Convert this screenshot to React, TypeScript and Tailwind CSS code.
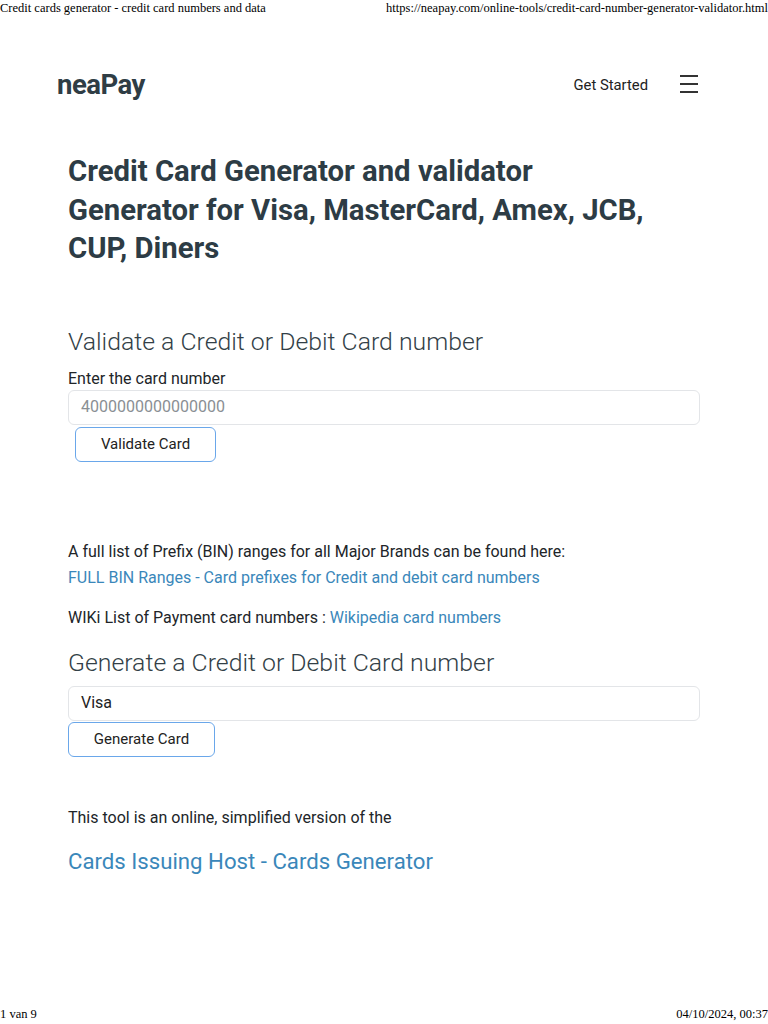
import React from "react";

const sans = "font-['Roboto',sans-serif]";

const App = () => {
  return (
    <div className="min-h-[1024px] w-full bg-white flex flex-col text-[#212529]">
      <div className="flex justify-between font-['Liberation_Serif',serif] text-[12.5px] leading-[16px] text-black">
        <span>Credit cards generator - credit card numbers and data</span>
        <span>https://neapay.com/online-tools/credit-card-number-generator-validator.html</span>
      </div>

      <div className={`flex-1 ${sans}`}>
        <div className="flex items-center justify-between pl-[57px] pr-[70px] mt-[49px] h-[40px]">
          <span className="text-[27.5px] font-bold text-[#2f3d45] tracking-[-0.5px]">neaPay</span>
          <div className="flex items-center gap-[32px]">
            <span className="text-[14.8px] text-[#222]">Get Started</span>
            <div className="flex flex-col gap-[6px] w-[18px] -mt-[2px]">
              <span className="block h-[2px] bg-[#333]" />
              <span className="block h-[2px] bg-[#333]" />
              <span className="block h-[2px] bg-[#333]" />
            </div>
          </div>
        </div>

        <div className="pl-[68px] pr-[68px]">
          <h1 className="mt-[47px] text-[29.3px] leading-[38.5px] font-bold text-[#2d3c45]">
            Credit Card Generator and validator
            <br />
            Generator for Visa, MasterCard, Amex, JCB,
            <br />
            CUP, Diners
          </h1>

          <h2 className="mt-[58px] text-[24.8px] leading-[32px] font-light text-[#333f47]">
            Validate a Credit or Debit Card number
          </h2>
          <div className="mt-[11px] text-[16px] leading-[20px]">Enter the card number</div>
          <div className="mt-[1px] h-[35px] rounded-md border border-[#e3e5e8] flex items-center px-[12px] text-[16px] text-[#8a8f94]">
            4000000000000000
          </div>
          <button className="ml-[7px] mt-[2px] w-[141px] h-[35px] rounded-md border border-[#6aa7ea] bg-white text-[15px] text-[#222]">
            Validate Card
          </button>

          <p className="mt-[77px] text-[16px] leading-[26px]">
            A full list of Prefix (BIN) ranges for all Major Brands can be found here:
            <br />
            <a className="text-[#3a87ba]">FULL BIN Ranges - Card prefixes for Credit and debit card numbers</a>
          </p>
          <p className="mt-[14px] text-[16px] leading-[26px]">
            WIKi List of Payment card numbers : <a className="text-[#3a87ba]">Wikipedia card numbers</a>
          </p>

          <h2 className="mt-[16px] text-[24.8px] leading-[32px] font-light text-[#333f47]">
            Generate a Credit or Debit Card number
          </h2>
          <div className="mt-[7px] h-[35px] rounded-md border border-[#e3e5e8] flex items-center px-[12px] text-[16px] text-[#222]">
            Visa
          </div>
          <button className="mt-[1px] w-[147px] h-[35px] rounded-md border border-[#6aa7ea] bg-white text-[15px] text-[#222]">
            Generate Card
          </button>

          <p className="mt-[49px] text-[16px] leading-[24px]">This tool is an online, simplified version of the</p>
          <a className="block mt-[16px] text-[22.2px] leading-[30px] text-[#3a87ba]">
            Cards Issuing Host - Cards Generator
          </a>
        </div>
      </div>

      <div className="flex justify-between font-['Liberation_Serif',serif] text-[12.5px] leading-[16px] text-black pb-[2px]">
        <span>1 van 9</span>
        <span>04/10/2024, 00:37</span>
      </div>
    </div>
  );
};

export default App;
